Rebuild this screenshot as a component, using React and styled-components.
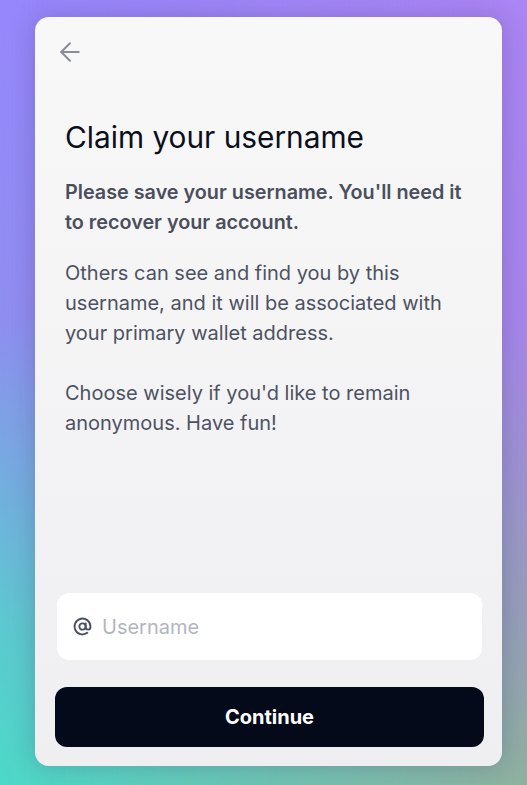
import { createGlobalStyle } from "styled-components";
import styled from "styled-components";
import { ArrowLeft, AtSign } from "lucide-react";

const GlobalStyle = createGlobalStyle`
  html, body {
    margin: 0;
    padding: 0;
    height: 100%;
  }
  body {
    font-family: Inter, "Noto Sans", "Liberation Sans", sans-serif;
  }
  #root {
    height: 100%;
  }
`;

export default function App() {
  return (
    <>
      <GlobalStyle />
      <Page>
        <Card>
          <BackButton aria-label="Back">
            <ArrowLeft size={30} strokeWidth={1.6} />
          </BackButton>
          <Title>Claim your username</Title>
          <Lead>Please save your username. You'll need it to recover your account.</Lead>
          <Body>
            Others can see and find you by this username, and it will be associated with
            your primary wallet address.
            <br />
            <br />
            Choose wisely if you'd like to remain anonymous. Have fun!
          </Body>
          <Spacer />
          <InputBox>
            <AtSign size={19} strokeWidth={2.4} color="#4b5060" />
            <input placeholder="Username" />
          </InputBox>
          <Button>Continue</Button>
        </Card>
      </Page>
    </>
  );
}

const Page = styled.div`
  position: relative;
  min-height: 785px;
  box-sizing: border-box;
  padding: 17px 25px 19px 35px;
  display: flex;
  background: linear-gradient(to bottom, #9687fc 0%, #8f8df0 40%, #5cc9d0 80%, #4cd9c8 100%);
  &::before {
    content: "";
    position: absolute;
    inset: 0;
    background: linear-gradient(to bottom, #ab85f3 0%, #a685ea 40%, #969eb6 80%, #8fb09e 100%);
    -webkit-mask-image: linear-gradient(to right, transparent, black);
    mask-image: linear-gradient(to right, transparent, black);
  }
`;

const Card = styled.div`
  position: relative;
  flex: 1;
  display: flex;
  flex-direction: column;
  box-sizing: border-box;
  padding: 20px 18px 19px 20px;
  border-radius: 14px;
  background: linear-gradient(to bottom, #f8f8f8, #efeff2);
  box-shadow: 0 0 24px rgba(40, 30, 80, 0.22);
`;

const BackButton = styled.button`
  align-self: flex-start;
  display: flex;
  padding: 0;
  border: none;
  background: none;
  color: #8a8d99;
  cursor: pointer;
`;

const Title = styled.h1`
  margin: 52px 10px 0;
  font-size: 29.8px;
  line-height: 36px;
  font-weight: 400;
  color: #0b0f1c;
  letter-spacing: 0;
`;

const Lead = styled.p`
  margin: 22px 10px 0;
  font-size: 19.8px;
  line-height: 30px;
  font-weight: 600;
  color: #4a4f5e;
`;

const Body = styled.p`
  margin: 21px 10px 0;
  font-size: 20px;
  line-height: 30px;
  font-weight: 400;
  color: #4d5262;
`;

const Spacer = styled.div`
  flex: 1;
`;

const InputBox = styled.label`
  margin: 0 2px;
  height: 67px;
  box-sizing: border-box;
  display: flex;
  align-items: center;
  gap: 10px;
  padding: 0 16px;
  background: #ffffff;
  border-radius: 12px;
  input {
    flex: 1;
    border: none;
    outline: none;
    background: none;
    font-family: inherit;
    font-size: 20px;
    color: #0b0f1c;
    padding: 0;
    &::placeholder {
      color: #b3b6c0;
    }
  }
`;

const Button = styled.button`
  margin-top: 27px;
  height: 60px;
  border: none;
  border-radius: 12px;
  background: #040a1a;
  color: #ffffff;
  font-family: inherit;
  font-size: 20px;
  font-weight: 700;
  cursor: pointer;
`;
